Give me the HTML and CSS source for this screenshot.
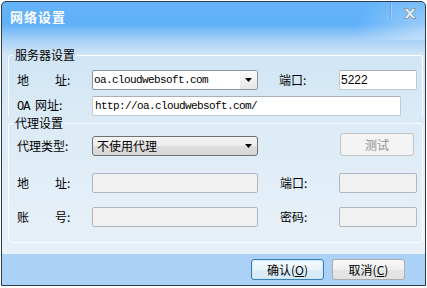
FILE: index.html
```html
<html>
<head>
    <meta charset="utf-8">
    <link rel="stylesheet" href="styles.css">
</head>
<body>
    <div class="window">
        <div class="titlebar">
            <span class="title">网络设置</span>
            <span class="sep"></span>
            <svg class="close" width="14" height="11" viewBox="0 0 14 11">
                <path d="M1 0.5 h3.6 l2.4 2.9 l2.4 -2.9 h3.6 l-4.1 5 l4.1 5 h-3.6 l-2.4 -2.9 l-2.4 2.9 h-3.6 l4.1 -5 z" fill="#e4eef6" stroke="#8499ad" stroke-width="1"/>
            </svg>
        </div>
        <div class="client">
            <fieldset class="group group-server">
                <legend>服务器设置</legend>
                <div class="row">
                    <label class="lbl"><span class="spread">地</span>址:</label>
                    <div class="combo">
                        <span class="combo-text mono">oa.cloudwebsoft.com</span>
                        <span class="drop">
                            <svg width="7" height="4" viewBox="0 0 7 4"><polygon points="0,0 7,0 3.5,4" fill="#000"/></svg>
                        </span>
                    </div>
                    <label class="lbl lbl-right">端口:</label>
                    <div class="input port">5222</div>
                </div>
                <div class="row row-gap">
                    <label class="lbl"><span class="oa">OA</span> 网址:</label>
                    <div class="input url mono">http://oa.cloudwebsoft.com/</div>
                </div>
            </fieldset>
            <fieldset class="group group-proxy">
                <legend>代理设置</legend>
                <div class="row row-type">
                    <label class="lbl">代理类型:</label>
                    <div class="combo combo-list">
                        <span class="combo-text">不使用代理</span>
                        <span class="drop">
                            <svg width="7" height="4" viewBox="0 0 7 4"><polygon points="0,0 7,0 3.5,4" fill="#000"/></svg>
                        </span>
                    </div>
                    <button class="btn btn-test" disabled>测试</button>
                </div>
                <div class="row row-addr">
                    <label class="lbl"><span class="spread">地</span>址:</label>
                    <div class="input disabled"></div>
                    <label class="lbl lbl-right lbl-right2">端口:</label>
                    <div class="input port disabled"></div>
                </div>
                <div class="row row-acct">
                    <label class="lbl"><span class="spread">账</span>号:</label>
                    <div class="input disabled"></div>
                    <label class="lbl lbl-right lbl-right2">密码:</label>
                    <div class="input port disabled"></div>
                </div>
            </fieldset>
        </div>
        <div class="footer">
            <button class="btn btn-default">确认(<u>O</u>)</button>
            <button class="btn">取消(<u>C</u>)</button>
        </div>
    </div>
</body>
</html>
```
FILE: styles.css
```css
html, body{
    margin: 0;
    padding: 0;
    background: #fff;
    font-family: "Noto Sans CJK SC", "Liberation Sans", sans-serif;
    font-size: 12px;
    color: #000;
}
.window{
    width: 425px;
    height: 285px;
    margin: 1px 0 0 1px;
    box-sizing: border-box;
    border: 1px solid #2f3b47;
    border-radius: 5px 5px 0 0;
    overflow: hidden;
    display: flex;
    flex-direction: column;
    background: linear-gradient(to bottom, #66b4f8 0, #5fb0f8 22px, #a6d0f6 38px, #d0e5f5 52px, #dcebf6 120px, #e8f1f9 250px);
}
.titlebar{
    height: 38px;
    flex: none;
    display: flex;
    align-items: flex-start;
    background: radial-gradient(70px 40px at 100% 28px, rgba(255,255,255,.4), rgba(255,255,255,0));
}
.title{
    flex: 1;
    padding: 7px 0 0 8px;
    line-height: 16px;
    font-size: 13px;
    font-weight: bold;
    letter-spacing: 1px;
    color: #fff;
}
.sep{
    width: 0;
    height: 16px;
    border-left: 1px solid rgba(60,110,170,.28);
    border-right: 1px solid rgba(255,255,255,.3);
}
.close{
    margin: 6px 8px 0 11px;
}
.client{
    flex: 1;
    padding: 8px 2px 0 6px;
}
.group{
    margin: 0;
    padding: 8px 0 0 8px;
    border: 1px solid #fbfdff;
    border-radius: 3px;
    min-width: 0;
}
.group legend{
    margin-left: -4px;
    padding: 0 2px;
    line-height: 14px;
}
.group-server{
    border-bottom: none;
    border-radius: 3px 3px 0 0;
}
.group-proxy{
    padding-top: 3px;
    padding-bottom: 15px;
}
.row{
    display: flex;
    align-items: center;
    height: 20px;
}
.row-gap{
    margin-top: 6px;
}
.row-type{
    height: 23px;
    align-items: flex-end;
}
.row-addr{
    margin-top: 17px;
}
.row-acct{
    margin-top: 14px;
}
.lbl{
    width: 75px;
    flex: none;
    line-height: 20px;
    white-space: nowrap;
}
.spread{
    margin-right: 26px;
}
.oa{
    font-family: "Liberation Mono", monospace;
    font-size: 12px;
    letter-spacing: -1px;
    margin-right: 3px;
}
.lbl-right{
    width: 60px;
    margin-left: 21px;
}
.lbl-right2{
    width: 59px;
    margin-left: 22px;
}
.mono{
    font-family: "Liberation Mono", monospace;
    font-size: 11px;
    letter-spacing: -0.6px;
}
.combo{
    width: 166px;
    height: 20px;
    box-sizing: border-box;
    border: 1px solid #8a95a2;
    border-radius: 2px;
    background: #fff;
    display: flex;
    align-items: center;
    flex: none;
}
.combo-text{
    flex: 1;
    padding-left: 1px;
    line-height: 18px;
    white-space: nowrap;
}
.drop{
    width: 17px;
    height: 18px;
    display: flex;
    align-items: center;
    justify-content: center;
    background: linear-gradient(to bottom, #fbfbfb, #e6e6e6);
    border-radius: 0 1px 1px 0;
}
.combo-list{
    border-color: #707070;
    border-radius: 3px;
    background: linear-gradient(to bottom, #f4f4f4 0, #ececec 50%, #dedede 51%, #d6d6d6 100%);
}
.combo-list .combo-text{
    padding-left: 4px;
}
.combo-list .drop{
    background: none;
}
.input{
    height: 20px;
    width: 166px;
    box-sizing: border-box;
    border: 1px solid #c3c9d0;
    border-top-color: #a7aeb7;
    border-radius: 2px;
    background: #fff;
    line-height: 18px;
    white-space: nowrap;
    flex: none;
}
.port{
    width: 78px;
    padding-left: 1px;
    font-family: "Liberation Sans", sans-serif;
}
.url{
    width: 309px;
    padding-left: 2px;
}
.disabled{
    background: #f1f1f1;
    border-color: #b3b7bb;
}
.btn{
    width: 73px;
    height: 21px;
    padding: 0;
    box-sizing: border-box;
    border: 1px solid #acacac;
    border-radius: 3px;
    background: linear-gradient(to bottom, #f8f8f8 0, #efefef 50%, #e5e5e5 51%, #e2e2e2 100%);
    font-family: "Noto Sans CJK SC", sans-serif;
    font-size: 12px;
    line-height: 18px;
    color: #000;
}
.btn u{
    text-underline-offset: 1px;
}
.btn-test{
    width: 74px;
    height: 23px;
    margin-left: 82px;
    border-color: #c2c2c2;
    background: #f4f4f4;
    color: #8f8f8f;
}
.btn-default{
    border-color: #3c7fb1;
    box-shadow: inset 0 0 0 1px #c9e9fa;
    background: linear-gradient(to bottom, #f3f9fd 0, #e8f3fb 50%, #dcedf9 51%, #d6e9f7 100%);
}
.footer{
    height: 31px;
    flex: none;
    box-sizing: border-box;
    padding: 5px 20px 0 0;
    display: flex;
    justify-content: flex-end;
    align-items: flex-start;
    gap: 8px;
    background: #abd1f6;
}
```
